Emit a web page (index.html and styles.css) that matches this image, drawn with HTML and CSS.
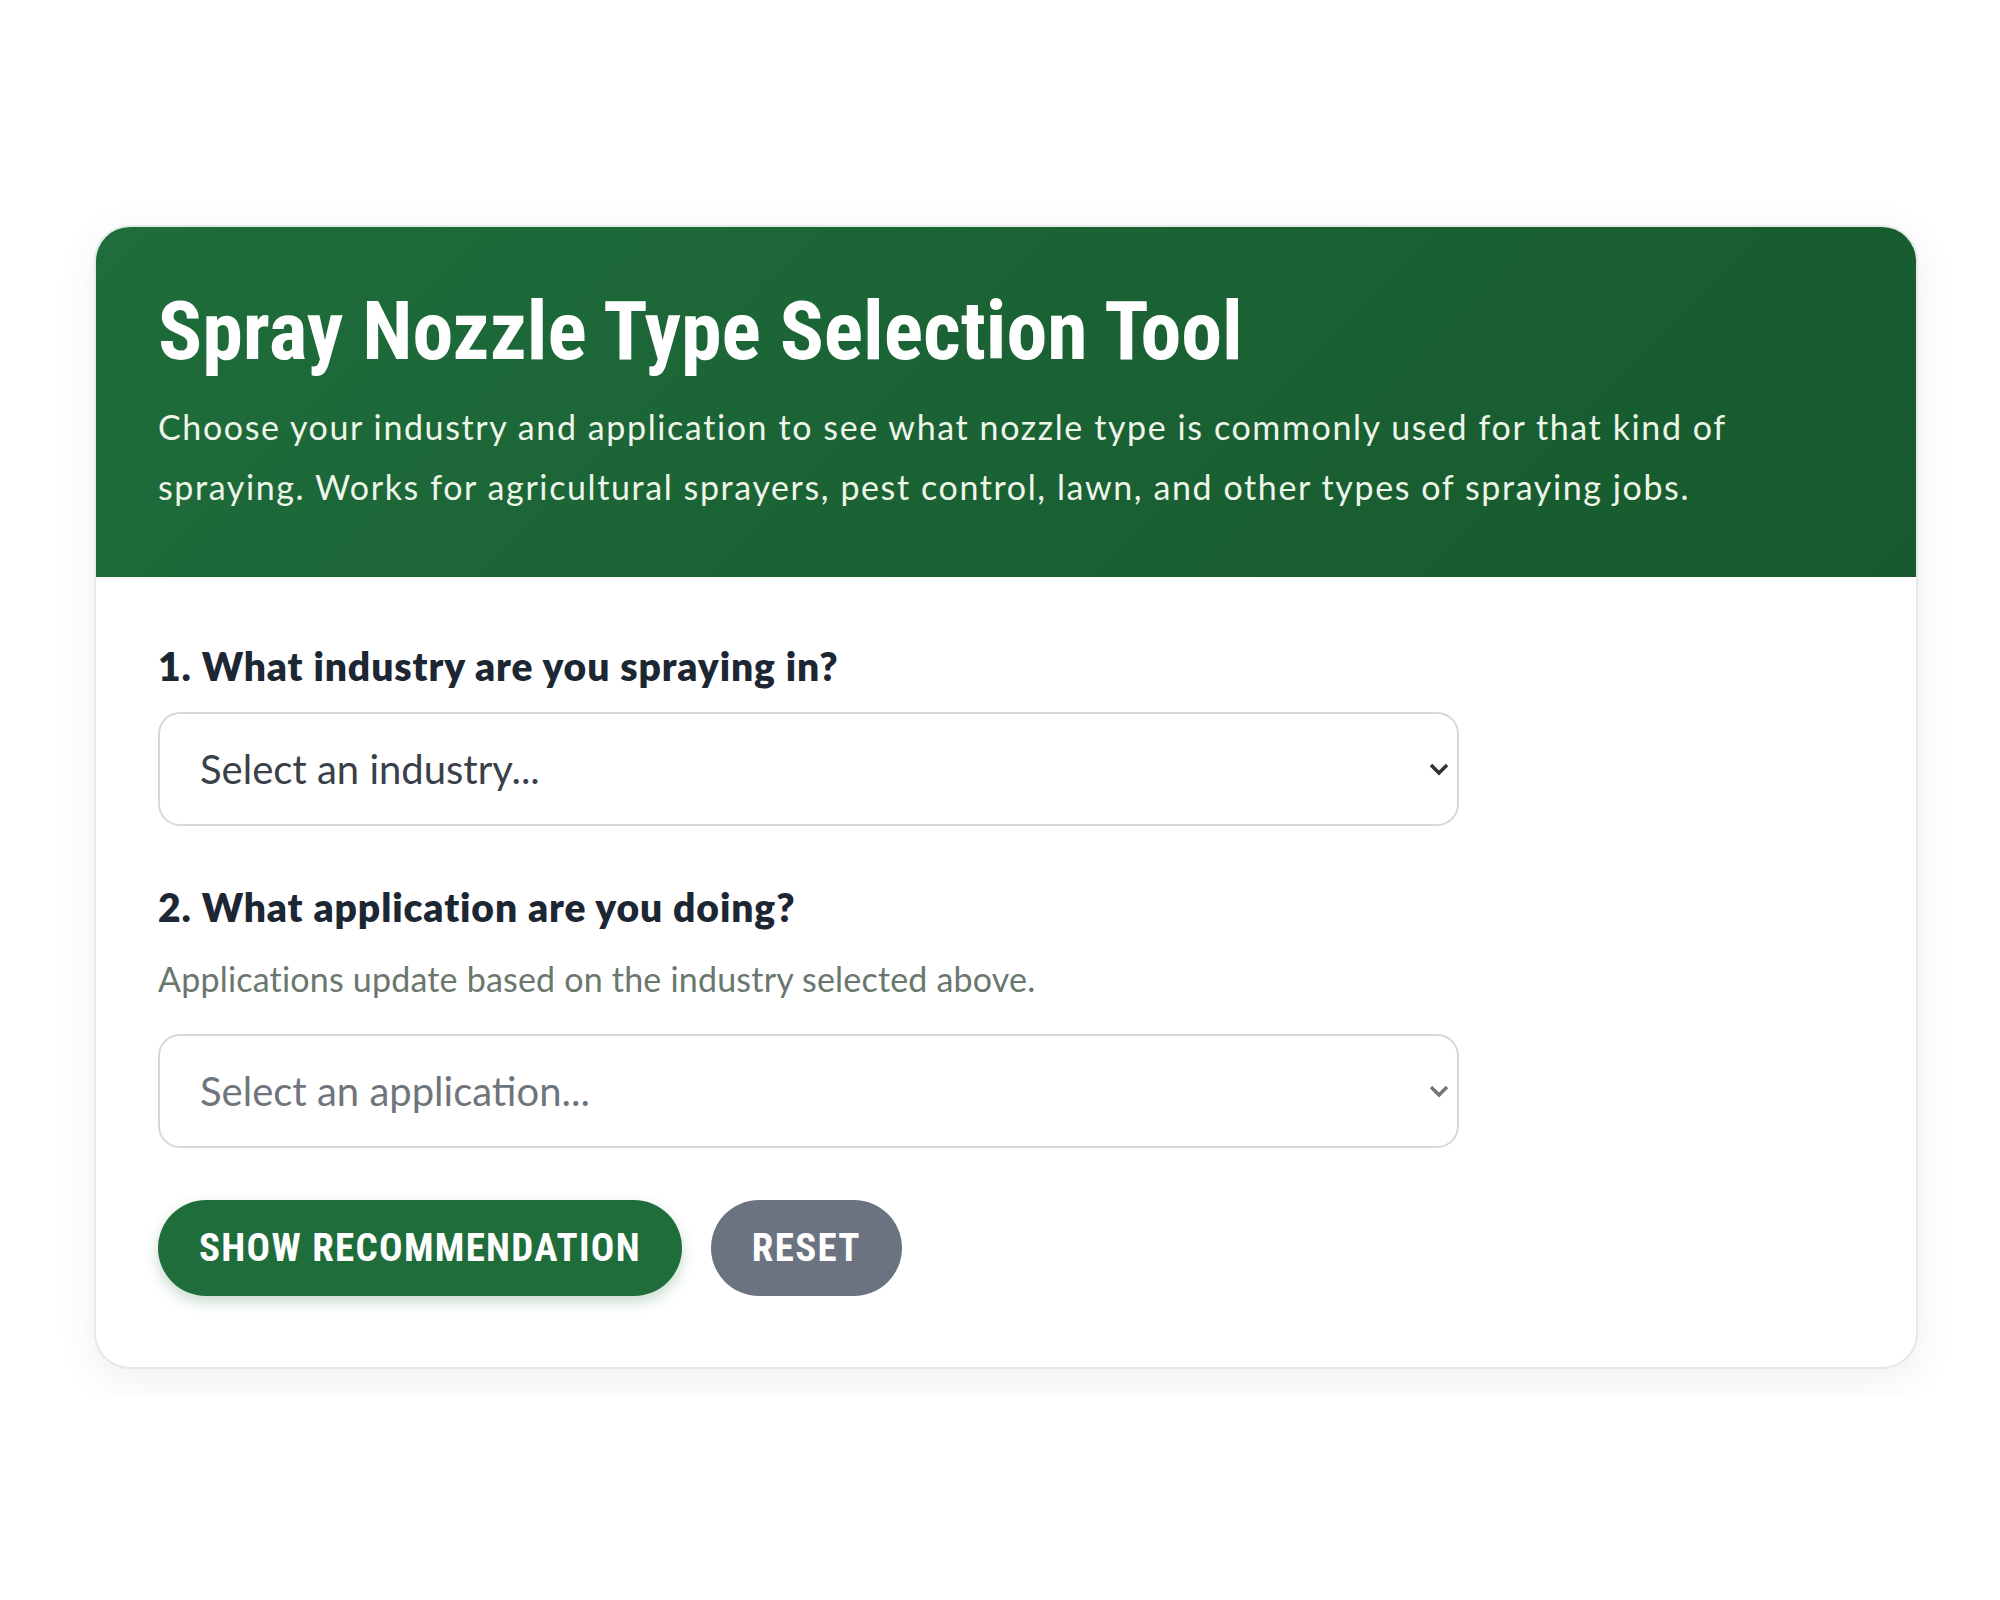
FILE: index.html
```html
<!DOCTYPE html>
<html lang="en">
<head>
    <meta charset="UTF-8">
    <meta name="viewport" content="width=device-width, initial-scale=1.0">
    <title>Spray Nozzle Type Selection Tool</title>
    <link rel="stylesheet" href="styles.css">
</head>
<body>

<div class="page">
    <div class="tool-card">
        <!-- header -->
        <div class="tool-header">
            <h1>Spray Nozzle Type Selection Tool</h1>
            <p>Choose your industry and application to see what nozzle type is commonly used for that kind of spraying. Works for agricultural sprayers, pest control, lawn, and other types of spraying jobs.</p>
        </div>

        <!-- form -->
        <div class="tool-body">
            <div class="field">
                <label for="industrySelect">1. What industry are you spraying in?</label>
                <div class="select-wrap">
                    <select id="industrySelect">
                        <option value="">Select an industry...</option>
                        <option value="ag">Agriculture</option>
                        <option value="pest">Pest Control</option>
                        <option value="lawn">Lawn &amp; Turf</option>
                        <option value="other">Other</option>
                    </select>
                    <svg class="chevron" viewBox="0 0 22 14" aria-hidden="true">
                        <path d="M3 3l8 8 8-8" />
                    </svg>
                </div>
            </div>

            <div class="field field-last">
                <label for="applicationSelect">2. What application are you doing?</label>
                <p class="hint">Applications update based on the industry selected above.</p>
                <div class="select-wrap">
                    <select id="applicationSelect" disabled>
                        <option value="">Select an application...</option>
                    </select>
                    <svg class="chevron chevron-muted" viewBox="0 0 22 14" aria-hidden="true">
                        <path d="M3 3l8 8 8-8" />
                    </svg>
                </div>
            </div>

            <div class="actions">
                <button class="btn btn-primary" type="button">Show Recommendation</button>
                <button class="btn btn-reset" type="button">Reset</button>
            </div>
        </div>
    </div>
</div>

</body>
</html>
```

FILE: styles.css
```css
body {
    margin: 0;
    padding: 0;
    background: #ffffff;
    font-family: Lato, "Open Sans", sans-serif;
}
.page {
    padding: 225px 80px 26px 94px;
    overflow: hidden;
}
.tool-card {
    box-sizing: border-box;
    width: 1824px;
    background: #ffffff;
    border: 2px solid #e4eae5;
    border-radius: 36px;
    overflow: hidden;
    box-shadow: 0 10px 40px rgba(30, 60, 40, 0.08);
}
.tool-header {
    background: linear-gradient(135deg, #1f6d3b 0%, #1a6134 55%, #165a2d 100%);
    padding: 57px 64px 60px;
    margin: -2px -2px 0;
}
.tool-header h1 {
    margin: 0;
    font-family: "Roboto Condensed", Roboto, sans-serif;
    font-stretch: condensed;
    font-weight: 700;
    font-size: 82px;
    line-height: 1.2;
    color: #ffffff;
}
.tool-header p {
    margin: 17px 0 0;
    font-size: 34px;
    line-height: 60px;
    letter-spacing: 1.6px;
    color: #eef6ea;
}
.tool-body {
    padding: 64px 62px 71px;
}
.field {
    margin-bottom: 56px;
}
.field-last {
    margin-bottom: 52px;
}
.field label {
    display: block;
    margin-bottom: 20px;
    font-weight: 800;
    font-size: 39px;
    line-height: 1.3;
    letter-spacing: 0.9px;
    color: #1c2733;
}
.hint {
    margin: 6px 0 30px;
    font-size: 34px;
    line-height: 1.5;
    letter-spacing: 0.2px;
    color: #6a776d;
}
.select-wrap {
    position: relative;
    max-width: 1301px;
}
.select-wrap select {
    box-sizing: border-box;
    width: 100%;
    height: 114px;
    padding: 0 70px 0 40px;
    font-family: Lato, "Open Sans", sans-serif;
    font-size: 40px;
    color: #3a4049;
    background: #ffffff;
    border: 2px solid #d2dbd4;
    border-radius: 22px;
    appearance: none;
    -webkit-appearance: none;
    outline: none;
}
.select-wrap select:disabled {
    color: #6f757c;
    opacity: 1;
    background: #ffffff;
}
.chevron {
    position: absolute;
    right: 9px;
    top: 50%;
    width: 22px;
    height: 14px;
    margin-top: -7px;
    fill: none;
    stroke: #333333;
    stroke-width: 3.5;
    pointer-events: none;
}
.chevron-muted {
    stroke: #777777;
}
.actions {
    display: flex;
    gap: 29px;
}
.btn {
    font-family: "Roboto Condensed", Roboto, sans-serif;
    font-stretch: condensed;
    font-weight: 700;
    font-size: 39px;
    line-height: 48px;
    letter-spacing: 1.3px;
    text-transform: uppercase;
    color: #ffffff;
    border: none;
    border-radius: 48px;
    padding: 24px 41px;
    cursor: pointer;
}
.btn-primary {
    background: #1f6d3b;
    box-shadow: 0 6px 14px rgba(31, 109, 59, 0.25);
}
.btn-reset {
    background: #6b7280;
}
```
